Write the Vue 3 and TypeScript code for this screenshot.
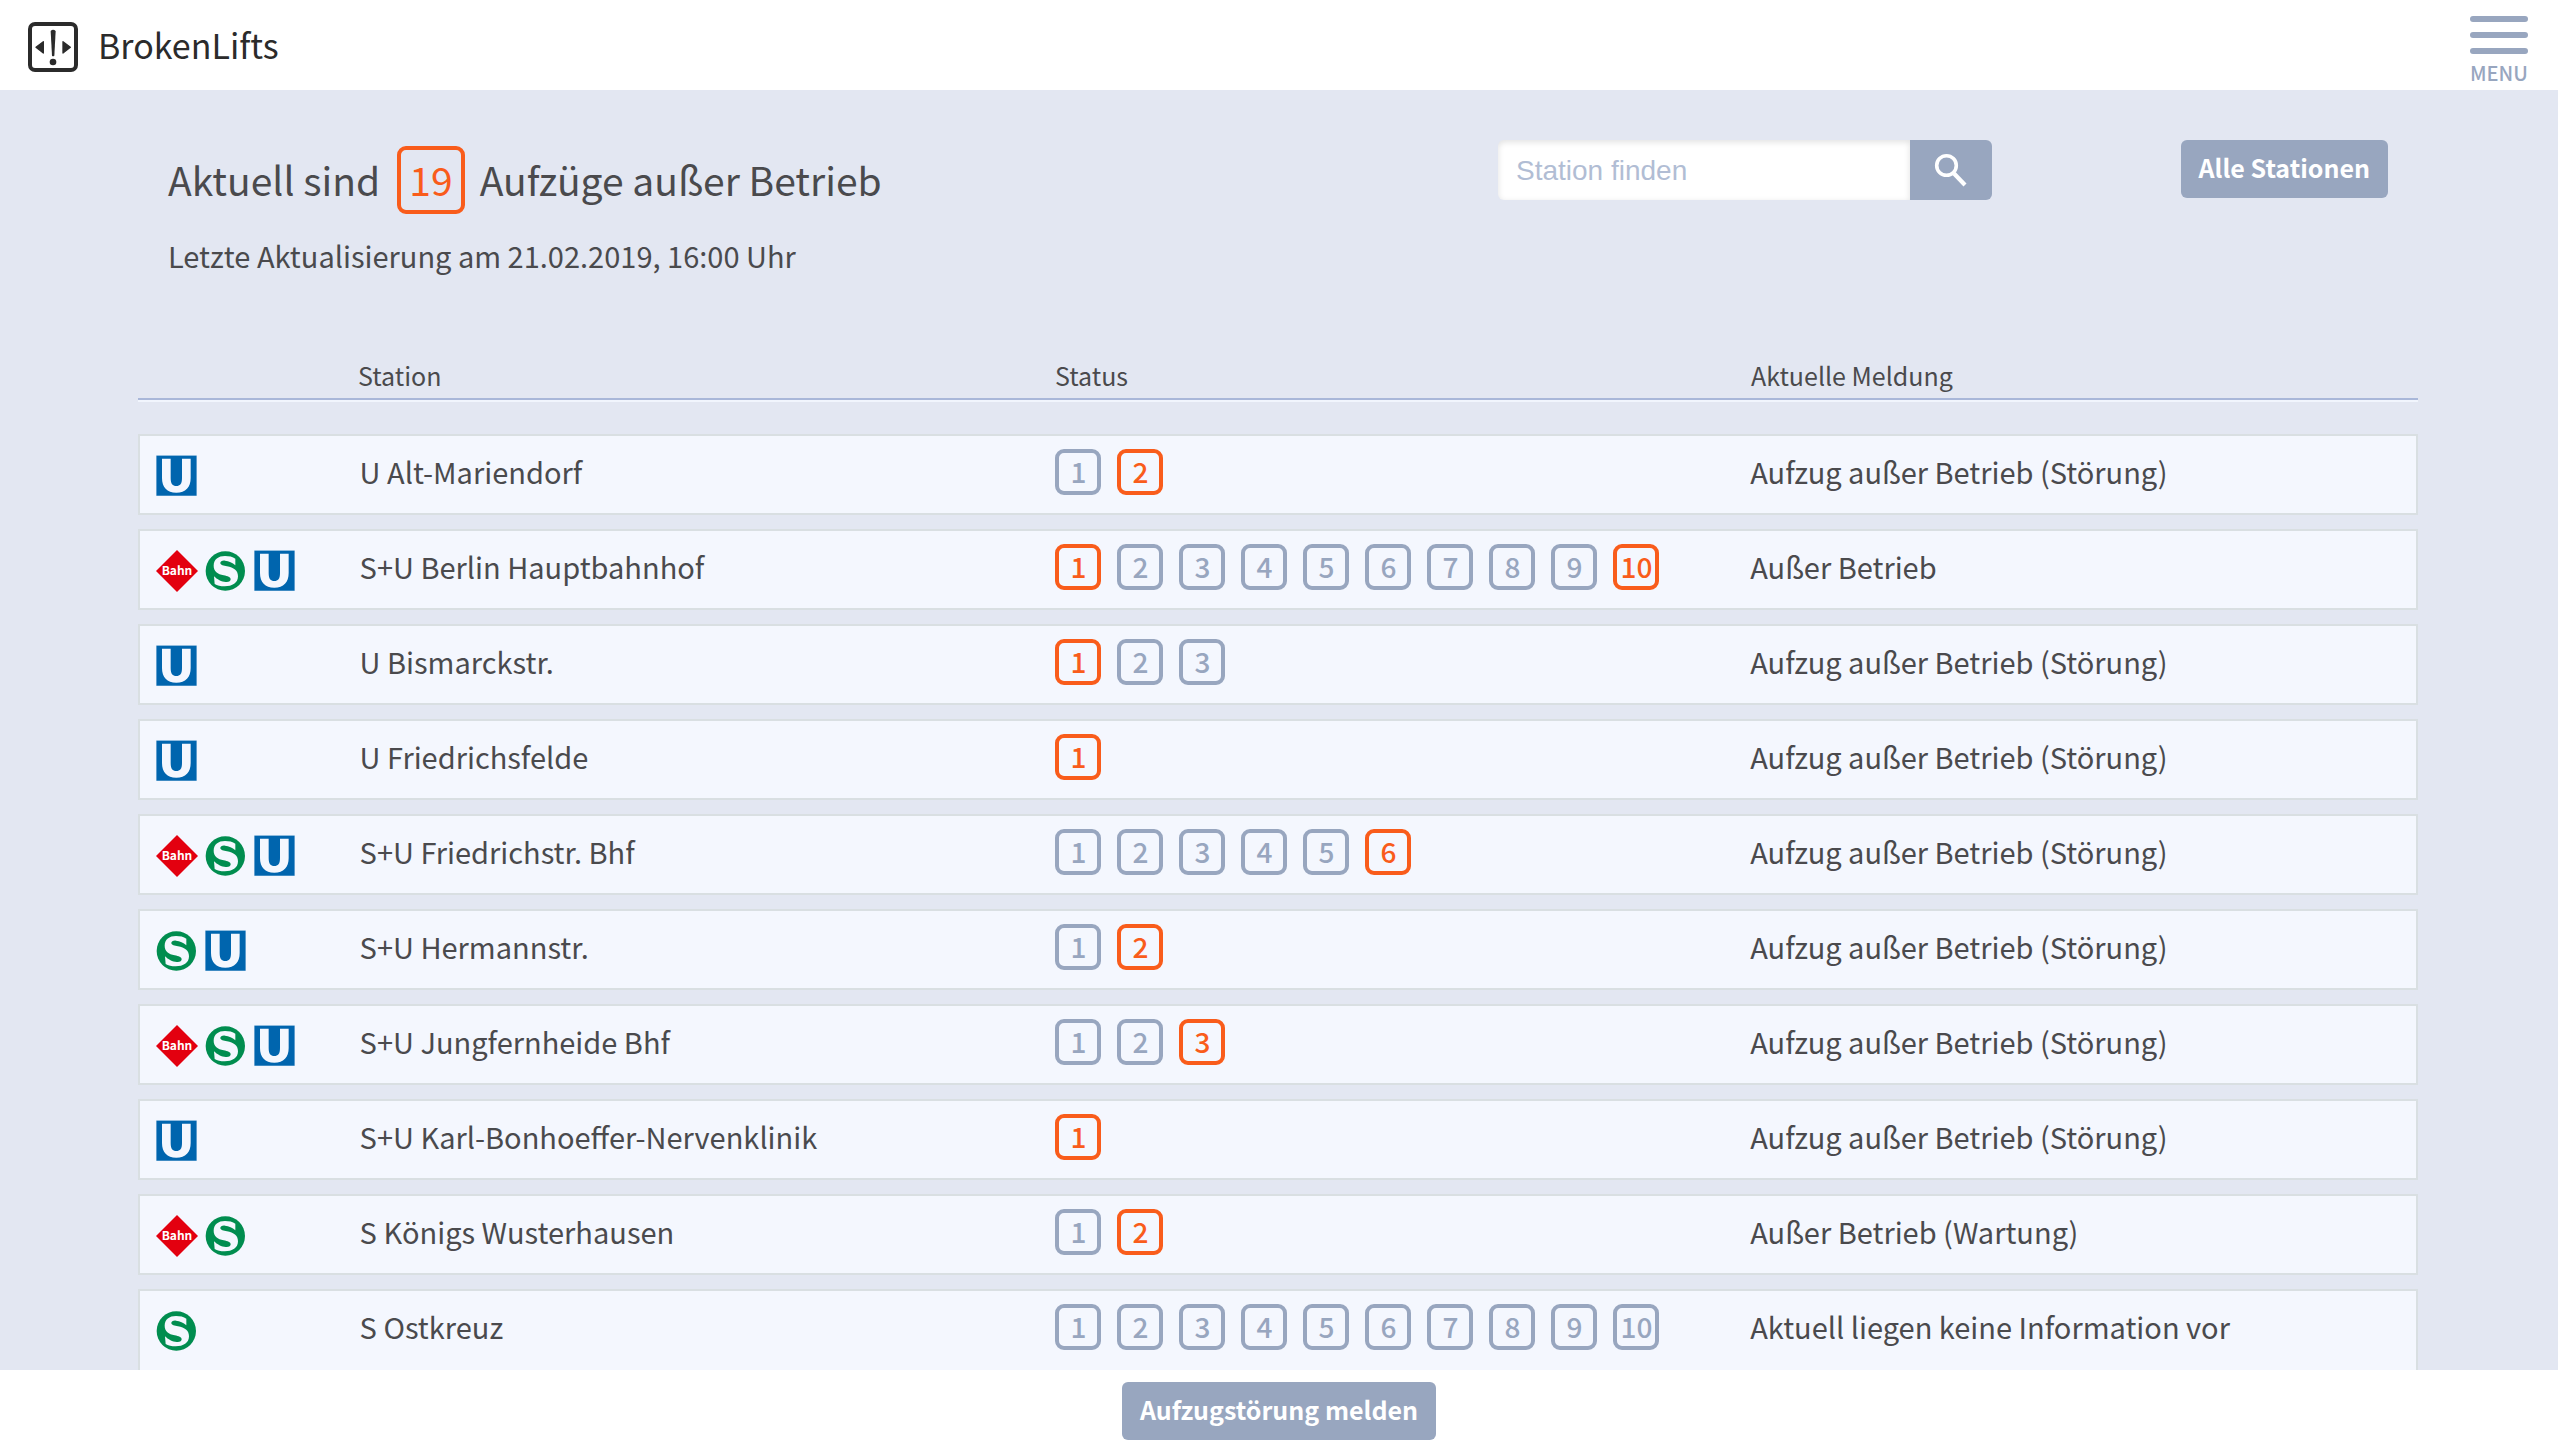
<script setup lang="ts">
import { ref } from 'vue'

type Line = 'bahn' | 's' | 'u'

interface Station {
  name: string
  lines: Line[]
  lifts: number
  broken: number[]
  message: string
}

const fault = 'Aufzug außer Betrieb (Störung)'

const stations: Station[] = [
  { name: 'U Alt-Mariendorf', lines: ['u'], lifts: 2, broken: [2], message: fault },
  { name: 'S+U Berlin Hauptbahnhof', lines: ['bahn', 's', 'u'], lifts: 10, broken: [1, 10], message: 'Außer Betrieb' },
  { name: 'U Bismarckstr.', lines: ['u'], lifts: 3, broken: [1], message: fault },
  { name: 'U Friedrichsfelde', lines: ['u'], lifts: 1, broken: [1], message: fault },
  { name: 'S+U Friedrichstr. Bhf', lines: ['bahn', 's', 'u'], lifts: 6, broken: [6], message: fault },
  { name: 'S+U Hermannstr.', lines: ['s', 'u'], lifts: 2, broken: [2], message: fault },
  { name: 'S+U Jungfernheide Bhf', lines: ['bahn', 's', 'u'], lifts: 3, broken: [3], message: fault },
  { name: 'S+U Karl-Bonhoeffer-Nervenklinik', lines: ['u'], lifts: 1, broken: [1], message: fault },
  { name: 'S Königs Wusterhausen', lines: ['bahn', 's'], lifts: 2, broken: [2], message: 'Außer Betrieb (Wartung)' },
  { name: 'S Ostkreuz', lines: ['s'], lifts: 10, broken: [], message: 'Aktuell liegen keine Information vor' },
]

const query = ref('')
</script>

<template>
  <div class="app">
    <header class="topbar">
      <a class="brand" href="#">
        <svg class="logo" viewBox="0 0 150 150" aria-hidden="true">
          <rect x="6" y="6" width="138" height="138" rx="15" fill="none" stroke="#2b2b2b" stroke-width="12" />
          <path d="M68 27Q75 20 83 27L79 101Q75 105 72 101Z" fill="#2b2b2b" />
          <circle cx="75" cy="120" r="10" fill="#2b2b2b" />
          <path d="M24 76L46 59V93ZM127 76L105 59V93Z" fill="#2b2b2b" stroke="#2b2b2b" stroke-width="4" stroke-linejoin="round" />
        </svg>
        <span>BrokenLifts</span>
      </a>
      <button class="menu" type="button">
        <span class="bar"></span>
        <span class="bar"></span>
        <span class="bar"></span>
        <span class="menu-label">MENU</span>
      </button>
    </header>

    <main class="content">
      <section class="intro">
        <div class="summary">
          <h1>Aktuell sind <span class="count">19</span> Aufzüge außer Betrieb</h1>
          <p>Letzte Aktualisierung am 21.02.2019, 16:00 Uhr</p>
        </div>
        <form class="search" role="search" @submit.prevent>
          <input v-model="query" type="text" placeholder="Station finden" aria-label="Station finden" />
          <button type="submit" aria-label="Suchen">
            <svg viewBox="0 0 34 34" aria-hidden="true">
              <circle cx="12.5" cy="12.5" r="9.8" fill="none" stroke="#fff" stroke-width="3.6" />
              <path d="M20 20.5L31 32" stroke="#fff" stroke-width="4.2" />
            </svg>
          </button>
        </form>
        <div class="all">
          <button class="button" type="button">Alle Stationen</button>
        </div>
      </section>

      <table class="stations">
        <thead>
          <tr>
            <th aria-label="Linien"></th>
            <th scope="col">Station</th>
            <th scope="col">Status</th>
            <th scope="col">Aktuelle Meldung</th>
          </tr>
        </thead>
        <tbody>
          <tr v-for="station in stations" :key="station.name">
            <td class="lines">
              <template v-for="line in station.lines" :key="line">
                <svg v-if="line === 'bahn'" viewBox="0 0 42 42" role="img" aria-label="Bahn">
                  <path d="M21 0L42 21L21 42L0 21Z" fill="#e3000f" />
                  <text class="bahn-text" x="21" y="25">Bahn</text>
                </svg>
                <svg v-else-if="line === 's'" viewBox="-2 -4 126 126" role="img" aria-label="S-Bahn">
                  <circle cx="59" cy="59" r="59" fill="#008d4f" />
                  <path
                    d="M89 42C80 34 70 29 58 28C50 27 44 30 44 35C44 41 54 43 64 45C84 49 97 57 97 75C97 95 80 105 57 105C45 105 34 102 27 98L25 75C34 84 48 92 60 92C70 93 75 89 75 84C75 77 66 75 54 72C36 68 24 60 24 43C24 24 38 14 58 14C70 14 81 16 89 22Z"
                    fill="#f4f7fe"
                  />
                </svg>
                <svg v-else viewBox="-1 -1 126 126" role="img" aria-label="U-Bahn">
                  <rect width="121" height="122" fill="#5f9fce" />
                  <rect x="1" y="2" width="119" height="118" fill="#0065ae" />
                  <path d="M17 10H43V68C43 86 49 92 60 92S77 86 77 68V10H103V68C103 96 88 112 60 112S17 96 17 68Z" fill="#f4f7fe" />
                </svg>
              </template>
            </td>
            <td class="name">{{ station.name }}</td>
            <td class="status">
              <span
                v-for="n in station.lifts"
                :key="n"
                class="lift"
                :class="{ broken: station.broken.includes(n) }"
              >{{ n }}</span>
            </td>
            <td class="message">{{ station.message }}</td>
          </tr>
        </tbody>
      </table>
    </main>

    <footer class="report">
      <button class="button" type="button">Aufzugstörung melden</button>
    </footer>
  </div>
</template>

<style>
body {
  margin: 0;
}
</style>

<style scoped>
.app {
  --slate: #98a6bf;
  --orange: #f95c1b;
  display: flex;
  flex-direction: column;
  height: 100vh;
  background: #e3e7f2;
  color: #4a4a4d;
  font-family: "Noto Sans CJK SC", "Noto Sans", sans-serif;
  font-size: 29px;
  line-height: 46px;
}

button,
input {
  box-sizing: border-box;
  margin: 0;
  border: 0;
  font: inherit;
}

.topbar {
  display: flex;
  flex: none;
  align-items: flex-start;
  justify-content: space-between;
  box-sizing: border-box;
  height: 90px;
  padding: 0 24px 0 28px;
  background: #fff;
}

.brand {
  display: flex;
  align-items: flex-start;
  gap: 20px;
  padding-top: 22px;
  color: #2b2b2b;
  font-size: 34px;
  line-height: 46px;
  text-decoration: none;
}

.logo {
  width: 50px;
  height: 50px;
}

.menu {
  display: flex;
  flex-direction: column;
  align-items: center;
  gap: 10px;
  padding: 16px 6px 0;
  background: none;
  color: var(--slate);
}

.bar {
  width: 58px;
  height: 6px;
  border-radius: 3px;
  background: var(--slate);
}

.menu-label {
  font-size: 20px;
  font-weight: 500;
  line-height: 17px;
}

.content {
  flex: 1;
  min-height: 0;
  overflow: hidden;
  padding: 0 140px 0 138px;
}

.intro {
  display: grid;
  grid-template-columns: 7fr 3fr 2fr;
  align-items: start;
  padding-top: 50px;
}

.summary,
.search,
.all {
  padding: 0 30px;
}

h1 {
  height: 68px;
  margin: 5px 0 0;
  font-size: 39px;
  font-weight: 400;
  line-height: 68px;
}

.count {
  display: inline-block;
  box-sizing: border-box;
  min-width: 68px;
  height: 68px;
  margin: 0 6px 0 8px;
  border: 4px solid var(--orange);
  border-radius: 9px;
  color: var(--orange);
  line-height: 58px;
  text-align: center;
}

p {
  margin: 19px 0 0;
}

.search {
  display: flex;
  height: 60px;
  max-width: 494px;
}

.search input {
  flex: 1;
  min-width: 0;
  padding: 2px 18px 0;
  border-radius: 6px 0 0 6px;
  background: #fff;
  box-shadow: inset 0 2px 6px rgb(0 0 0 / 12%);
  color: #4a4a4d;
  font-family: "Liberation Sans", Arial, sans-serif;
  font-size: 28px;
}

.search input::placeholder {
  color: #b1bdd4;
  opacity: 1;
}

.search button {
  display: flex;
  align-items: center;
  justify-content: center;
  width: 82px;
  padding: 0;
  border-radius: 0 6px 6px 0;
  background: var(--slate);
}

.search svg {
  width: 34px;
  height: 34px;
}

.all {
  text-align: right;
}

.button {
  height: 58px;
  padding: 0 18px 4px;
  border-radius: 6px;
  background: var(--slate);
  color: #fff;
  font-size: 25px;
  font-weight: 700;
  line-height: 54px;
  vertical-align: top;
}

.stations {
  display: block;
  margin-top: 72px;
}

thead,
tbody {
  display: block;
}

tr {
  display: grid;
  grid-template-columns: 220fr 697fr 696fr 667fr;
}

thead tr {
  border-bottom: 2px solid #a9b7d9;
  box-shadow: 0 2px 0 #f1f5fd;
}

th {
  padding: 2px 0 0;
  font-size: 25px;
  font-weight: 400;
  text-align: left;
}

tbody {
  padding-top: 34px;
}

tbody tr {
  box-sizing: border-box;
  min-height: 81px;
  margin-bottom: 14px;
  border: 2px solid #d9dfe2;
  background: #f4f7fe;
}

tbody tr:last-child {
  padding-bottom: 20px;
}

td {
  padding: 12px 0 0;
}

.lines {
  display: flex;
  gap: 7px;
  padding: 19px 0 0 16px;
}

.lines svg {
  width: 42px;
  height: 42px;
}

.bahn-text {
  fill: #fff;
  font-size: 12px;
  font-weight: 700;
  text-anchor: middle;
}

.status {
  display: flex;
  gap: 16px;
  padding-top: 13px;
}

.lift {
  box-sizing: border-box;
  width: 46px;
  height: 46px;
  border: 4px solid var(--slate);
  border-radius: 9px;
  color: var(--slate);
  font-size: 28px;
  font-weight: 500;
  line-height: 36px;
  text-align: center;
}

.lift.broken {
  border-color: var(--orange);
  color: var(--orange);
}

.report {
  display: flex;
  flex: none;
  justify-content: center;
  padding: 12px 0;
  background: #fff;
}
</style>
